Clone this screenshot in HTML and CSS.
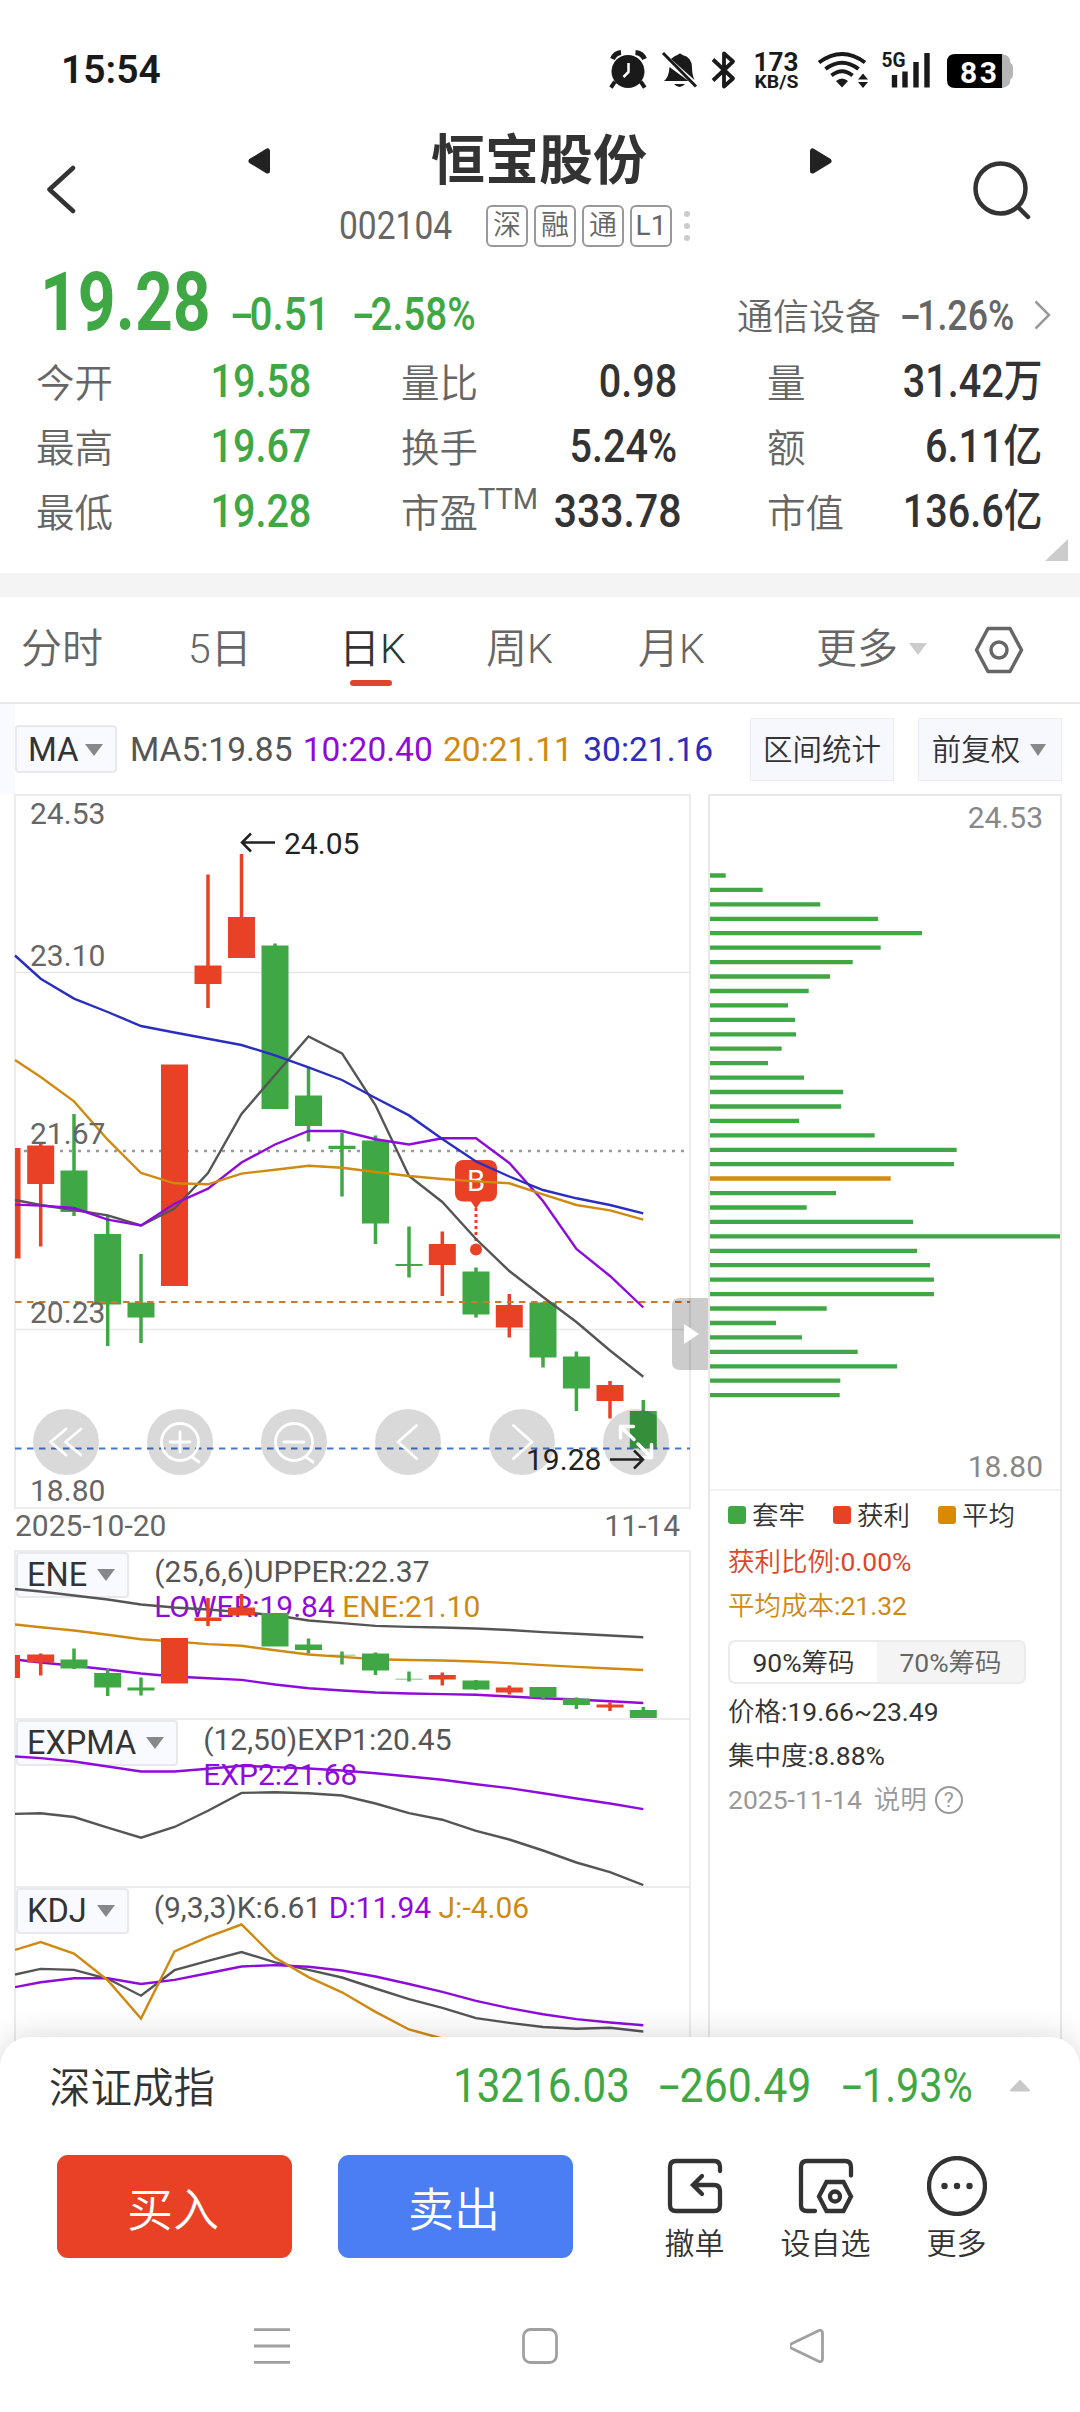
FILE: index.html
```html
<!DOCTYPE html>
<html lang="zh-CN">
<head>
    <meta charset="UTF-8">
    <meta name="viewport" content="width=device-width, initial-scale=1.0">
    <title>恒宝股份 002104</title>
    <link rel="stylesheet" href="styles.css">
</head>
<body>
<div class="page">

    <!-- 状态栏 -->
    <div class="status">
        <span class="time">15:54</span>
        <svg class="status-icons" width="420" height="50" viewBox="600 45 420 50">
            <g fill="#1a1a1a">
                <circle cx="628" cy="71.500" r="16.500"/>
                <path d="M615 83l-4 6M641 83l4 6" stroke="#1a1a1a" stroke-width="4" transform="translate(3 -1) scale(.995)"/>
                <path d="M612.500 59q2.500-6 8.500-6.500M635.500 52.500q6.500.5 9 6.500" fill="none" stroke="#1a1a1a" stroke-width="5"/>
                <path d="M628.500 63v9l-5 5" fill="none" stroke="#fff" stroke-width="2.500"/>
                <path d="M664 81q5-4 5.500-14l19 14zM671 59q4-3.500 6.500-4 2.500-3 5 0 9 2 9.500 12 0 8 2.500 13zM674 84h11q-5.500 6-11 0z"/>
                <path d="M663 53l33 33.500" stroke="#1a1a1a" stroke-width="3"/>
                <path d="M713 59.500l20 19-9 8v-33l9 8-20 19" fill="none" stroke="#1a1a1a" stroke-width="3.800" stroke-linejoin="round"/>
                <path d="M842 87.500l-6-6.500q6-5 12 0z"/>
                <path d="M831.500 75.500q10.500-8.500 21 0M825.500 69q16.500-12.500 33 0M819 62.500q23-17 46 0" fill="none" stroke="#1a1a1a" stroke-width="4"/>
                <path d="M858 79.500l5-6 5 6zM858 82l5 6 5-6z"/>
                <path d="M894.500 75v12.500M905 71.500v16M916 62v25.500M927 53v34.500" stroke="#1a1a1a" stroke-width="5.400"/>
                <path d="M1002 54q8.500 1 8.500 9 2.500 1 2.500 4v8q0 3-2.500 4 0 8-8.500 9z" fill="#b5b5b5"/>
                <path d="M1002 54h-47q-8 0-8 8v18q0 8 8 8h47z" fill="#000"/>
            </g>
            <g class="status-text">
                <text x="753.500" y="71" font-size="26" textLength="45" lengthAdjust="spacingAndGlyphs">173</text>
                <text x="754.500" y="87.500" font-size="17.500" textLength="44" lengthAdjust="spacingAndGlyphs">KB/S</text>
                <text x="881.500" y="67" font-size="21" textLength="24" lengthAdjust="spacingAndGlyphs">5G</text>
                <text x="960" y="82.500" font-size="30" textLength="37" fill="#fff">83</text>
            </g>
        </svg>
    </div>

    <!-- 标题 -->
    <header class="head">
        <svg width="30" height="50" viewBox="48 166 30 50"><path d="M74 169L50.500 190.500 74 212" fill="none" stroke="#333" stroke-width="4.500" stroke-linecap="round" stroke-linejoin="round"/></svg>
        <svg class="prev" width="24" height="28" viewBox="0 0 24 28"><path d="M20.500 4v20L4 14z" fill="#222" stroke="#222" stroke-width="5" stroke-linejoin="round"/></svg>
        <div class="title">
            <h1>恒宝股份</h1>
            <div class="code">
                <span class="num code-num">002104</span>
                <i>深</i><i>融</i><i>通</i><i>L1</i>
                <svg width="6" height="32" viewBox="0 0 6 32" fill="#ccc"><circle cx="3" cy="4" r="3"/><circle cx="3" cy="16" r="3"/><circle cx="3" cy="28" r="3"/></svg>
            </div>
        </div>
        <svg class="next" width="24" height="28" viewBox="0 0 24 28"><path d="M3.500 4v20L20 14z" fill="#222" stroke="#222" stroke-width="5" stroke-linejoin="round"/></svg>
        <svg class="search" width="60" height="60" viewBox="972 160 60 60" fill="none" stroke="#333" stroke-width="4.500" stroke-linecap="round"><circle cx="1000.500" cy="188.500" r="25"/><path d="M1018 207l10 10"/></svg>
    </header>

    <!-- 报价 -->
    <section class="quote">
        <div class="price-row">
            <span class="num price">19.28</span>
            <span class="num change"><i class="minus">-</i>0.51</span>
            <span class="num percent"><i class="minus">-</i>2.58%</span>
            <span class="sector">通信设备</span>
            <span class="num sector-num"><i class="minus">-</i>1.26%</span>
            <svg width="20" height="30" viewBox="0 0 20 30"><path d="M2.500 1.500L16 15 2.500 28.500" fill="none" stroke="#999" stroke-width="2.500"/></svg>
        </div>
        <div class="stats">
            <div class="cell"><label>今开</label><b class="num green">19.58</b></div>
            <div class="cell"><label>量比</label><b class="num">0.98</b></div>
            <div class="cell"><label>量</label><b class="num">31.42<em>万</em></b></div>
            <div class="cell"><label>最高</label><b class="num green">19.67</b></div>
            <div class="cell"><label>换手</label><b class="num">5.24%</b></div>
            <div class="cell"><label>额</label><b class="num">6.11<em>亿</em></b></div>
            <div class="cell"><label>最低</label><b class="num green">19.28</b></div>
            <div class="cell"><label>市盈<sup>TTM</sup></label><b class="num wide-num">333.78</b></div>
            <div class="cell"><label>市值</label><b class="num">136.6<em>亿</em></b></div>
        </div>
        <div class="corner"></div>
    </section>

    <!-- 周期 -->
    <nav class="tabs">
        <span>分时</span>
        <span>5日</span>
        <span class="active">日K</span>
        <span>周K</span>
        <span>月K</span>
        <span class="more">更多<i class="arrow light"></i></span>
        <svg width="50" height="50" viewBox="974 624 50 50" fill="none" stroke="#666" stroke-width="3.500" stroke-linejoin="round"><path d="M988 627.500h22l11.500 21.500-11.500 21.500h-22L976.500 649z"/><circle cx="999" cy="649" r="8"/></svg>
    </nav>

    <div class="ma-row">
        <div class="ma-select">MA<i class="arrow"></i></div>
        <div class="ma-values"><span class="c1">MA5:19.85</span> <span class="c2">10:20.40</span> <span class="c3">20:21.11</span> <span class="c4">30:21.16</span></div>
        <div class="tool">区间统计</div>
        <div class="tool">前复权<i class="arrow"></i></div>
    </div>

    <main class="charts">
        <div class="left">
            <!-- K线 -->
            <svg class="kline" width="677" height="715" viewBox="14 794 677 715">
                <path class="grid" d="M15 972.500H690M15 1329.500H690"/>
                <rect class="frame" x="15" y="795" width="675" height="713"/>
                <path d="M24 1151H685" stroke="#999" stroke-width="2.500" stroke-dasharray="3 6"/>
                <path class="wick up" d="M40.700 1144V1246.500M208 874.500V1008M241.500 854V920M442.300 1231.500V1296M509.300 1294V1337.500M610 1381V1418.500"/>
                <path class="wick down" d="M74 1114V1216M107.700 1215V1346M141 1254V1343M275 943.500V950M308.500 1067.500V1141.500M342 1132.500V1196.500M375.500 1135.500V1244M409 1226.500V1277.500M476 1267.500V1317.500M543 1302.500V1367.500"/>
                <path class="wick down" d="M576.400 1351.500V1411M643.300 1400V1411"/>
                <path d="M17.800 1148V1258.500" stroke="#e84125" stroke-width="5.500"/>
                <path class="body up" d="M40.700 1145.500V1184M174.500 1064.500V1286M208 965.500V984M241.500 917V958M442.300 1244V1265M509.300 1305V1327.500M610 1385V1401"/>
                <path class="body down" d="M74 1170.500V1212M107.700 1234V1304.500M141 1302.500V1317.500M275 945.500V1109M308.500 1095.500V1126M342 1145.800V1149M375.500 1140.500V1223.500M409 1264V1266M476 1271.500V1314.500M543 1302.500V1357.500M576.400 1356.500V1388.500M643.300 1411V1448.500"/>
                <path d="M15 1302H690" stroke="#c97a2b" stroke-width="2" stroke-dasharray="6.500 5.500"/>
                <path d="M15 1448.500H690" stroke="#4a78c8" stroke-width="2" stroke-dasharray="6.500 5.500"/>
                <g class="marker">
                    <rect x="455" y="1160" width="42" height="41.500" rx="8"/>
                    <path d="M470 1200h12l-6 9z"/>
                    <path d="M476 1208V1243" stroke="#e84125" stroke-width="3" stroke-dasharray="3 3"/>
                    <circle cx="476" cy="1249.500" r="6"/>
                    <text x="476" y="1191" text-anchor="middle" fill="#fff">B</text>
                </g>
                <polyline class="line c1" points="15,1200 40.700,1205 74,1210 107.700,1215.300 141,1225.500 174.500,1208.500 208,1173 241.500,1114 275,1075 308.500,1036.400 342,1053.400 375.500,1105.300 409,1176 442.300,1202 476,1239 509.300,1271 543,1297 576.400,1322 610,1350.500 643.300,1376.700"/>
                <polyline class="line c2" points="15,1204.600 40.700,1205.600 74,1208 107.700,1219.600 141,1225.500 174.500,1203.700 208,1188.600 241.500,1162.500 275,1144.500 308.500,1131 342,1131 375.500,1139.200 409,1144.500 442.300,1138.200 476,1138.200 509.300,1163 543,1201 576.400,1249 610,1276 643.300,1307.500"/>
                <polyline class="line c3" points="15,1060 40.700,1077 74,1101.400 107.700,1139.700 141,1173 174.500,1183.300 208,1184.300 241.500,1173.600 275,1169.700 308.500,1165.800 342,1167.800 375.500,1172 409,1176 442.300,1179 476,1181.400 509.300,1183.300 543,1194.400 576.400,1205 610,1210.400 643.300,1219.700"/>
                <polyline class="line c4" points="15,955.500 40.700,978.700 74,998.600 107.700,1012 141,1026 174.500,1032.500 208,1038.800 241.500,1045 275,1055.300 308.500,1067.400 342,1080 375.500,1098 409,1115.400 442.300,1139 476,1161.500 509.300,1176.500 543,1190 576.400,1198.300 610,1205 643.300,1213.300"/>
                <g class="axis">
                    <text x="30" y="823.500">24.53</text>
                    <text x="30" y="966">23.10</text>
                    <text x="30" y="1144">21.67</text>
                    <text x="30" y="1323">20.23</text>
                    <text x="30" y="1501">18.80</text>
                </g>
                <!-- 底部工具按钮 -->
                <g fill="#000" fill-opacity=".15">
                    <circle cx="66" cy="1442" r="33"/><circle cx="180" cy="1442" r="33"/><circle cx="294" cy="1442" r="33"/>
                    <circle cx="408" cy="1442" r="33"/><circle cx="522" cy="1442" r="33"/><circle cx="636" cy="1442" r="33"/>
                </g>
                <g class="tools">
                    <path d="M66 1429L50.500 1442 66 1455M81 1429L65.500 1442 81 1455"/>
                    <circle cx="180" cy="1442" r="18.500"/><path d="M170 1442h20M180 1432v20M192 1457l7 5"/>
                    <circle cx="294" cy="1442" r="18.500"/><path d="M284 1442h20M306 1457l7 5"/>
                    <path d="M416.500 1425.500L398 1442l18.500 16.500M513.500 1425.500L532 1442l-18.500 16.500"/>
                    <path d="M620.500 1438v-11.500h13M620.500 1426.500l13.500 13M638 1444l13 13M638.500 1457.500h13v-13" stroke-width="3.500"/>
                </g>
                <path d="M275 842.500H242M251 833.500L242 842.500l9 9M610 1459.500h32.500M634 1450.500l9 9-9 9" fill="none" stroke="#222" stroke-width="2.500"/>
                <g class="axis dark"><text x="284" y="854">24.05</text><text x="526" y="1469.500">19.28</text></g>
                <path d="M708 1298h-28q-8 0-8 8v56q0 8 8 8h28z" fill="#000" fill-opacity=".2"/>
                <path d="M684 1324l15 10-15 10z" fill="#fff"/>
            </svg>
            <div class="dates"><span>2025-10-20</span><span>11-14</span></div>

            <!-- 副图 ENE -->
            <div class="sub">
                <div class="sub-select">ENE<i class="arrow"></i></div>
                <div class="sub-values"><span class="c1">(25,6,6)UPPER:22.37</span><br><span class="c2">LOWER:19.84</span> <span class="c3">ENE:21.10</span></div>
                <svg width="675" height="168" viewBox="15 1550.500 675 168">
                    <polyline class="line c1" points="15,1589.500 40.700,1592 74,1596 107.700,1600 141,1605 174.500,1608 208,1610 241.500,1612.600 275,1615.700 308.500,1621 342,1623.600 375.500,1626.400 409,1627.400 442.300,1628 476,1629 509.300,1630.500 543,1632.600 576.400,1634.300 610,1636 643.300,1637.700"/>
                    <polyline class="line c3" points="15,1625 40.700,1627.800 74,1631 107.700,1635.300 141,1639.800 174.500,1642 208,1644.600 241.500,1646.300 275,1650.800 308.500,1655 342,1657.400 375.500,1659.800 409,1660.500 442.300,1661 476,1662 509.300,1663.600 543,1665.600 576.400,1667.400 610,1669 643.300,1670.500"/>
                    <polyline class="line c2" points="15,1660 40.700,1663 74,1666.300 107.700,1670 141,1674 174.500,1677 208,1678.700 241.500,1680.400 275,1685 308.500,1688.700 342,1691 375.500,1693 409,1694 442.300,1694.600 476,1695.200 509.300,1697 543,1698.700 576.400,1700 610,1701.800 643.300,1703.500"/>
                    <path class="wick up" d="M40.700 1654V1676M208 1598.500V1626.500M241.500 1594.500V1610M442.300 1673V1686M509.300 1686V1695M610 1703V1711.500"/>
                    <path class="wick down" d="M74 1649V1669.500M107.700 1669.500V1696.500M141 1678V1696M308.500 1639V1654M342 1652V1665M375.500 1653V1675.500M409 1672V1682M476 1680.500V1690.500M543 1690V1700.500M576.400 1698V1709.500M643.300 1707.500V1712"/>
                    <path d="M17.500 1655.500V1678.500" stroke="#e84125" stroke-width="5"/>
                    <path class="body up" d="M40.700 1655V1663M174.500 1638.500V1684M208 1618V1621.500M241.500 1608V1616M442.300 1675.500V1680M509.300 1688V1693M610 1705V1708"/>
                    <path class="body down" d="M74 1660V1669M107.700 1673.500V1688M141 1688V1691M275 1613.500V1647M308.500 1645V1650.500M375.500 1654V1671M476 1681V1690M543 1687.500V1698M576.400 1699V1705.500M643.300 1710.500V1718.500"/>
                    <path class="body down" opacity=".45" d="M342 1655V1656.500M409 1679V1680.500"/>
                </svg>
            </div>

            <!-- 副图 EXPMA -->
            <div class="sub">
                <div class="sub-select">EXPMA<i class="arrow"></i></div>
                <div class="sub-values"><span class="c1">(12,50)EXP1:20.45</span><br><span class="c2">EXP2:21.68</span></div>
                <svg width="675" height="168" viewBox="15 1718.500 675 168">
                    <polyline class="line c2" points="15,1757 40.700,1758.600 74,1762 107.700,1767 141,1772 174.500,1772 208,1769.300 241.500,1766.200 275,1767.600 308.500,1769 342,1771 375.500,1773.800 409,1777 442.300,1780.300 476,1784.800 509.300,1788.600 543,1793.700 576.400,1799 610,1804 643.300,1809.600"/>
                    <polyline class="line c1" points="15,1814.400 40.700,1813.700 74,1817.500 107.700,1828.200 141,1838.200 174.500,1827.500 208,1811.300 241.500,1793.400 275,1792.700 308.500,1793.700 342,1796 375.500,1804 409,1813.700 442.300,1820.200 476,1831.300 509.300,1840 543,1851 576.400,1863 610,1872.600 643.300,1885.500"/>
                </svg>
            </div>

            <!-- 副图 KDJ -->
            <div class="sub">
                <div class="sub-select">KDJ<i class="arrow"></i></div>
                <div class="sub-values"><span class="c1">(9,3,3)K:6.61</span> <span class="c2">D:11.94</span> <span class="c3">J:-4.06</span></div>
                <svg width="675" height="168" viewBox="15 1886.500 675 168">
                    <polyline class="line c1" points="15,1975 40.700,1969.400 74,1970.400 107.700,1979.300 141,1996.200 174.500,1970.700 208,1961.400 241.500,1952.500 275,1962.800 308.500,1970.400 342,1978 375.500,1989 409,1999.700 442.300,2008.300 476,2018.600 509.300,2023.400 543,2027.500 576.400,2029.300 610,2028.200 643.300,2032"/>
                    <polyline class="line c2" points="15,1987.600 40.700,1982.800 74,1978.700 107.700,1978.700 141,1984.500 174.500,1980.400 208,1973.800 241.500,1967 275,1965.600 308.500,1967.300 342,1971 375.500,1977 409,1984.500 442.300,1992.400 476,2001.400 509.300,2008.600 543,2014.800 576.400,2019.600 610,2023 643.300,2025.800"/>
                    <polyline class="line c3" points="15,1950.400 40.700,1942.500 74,1954 107.700,1980.700 141,2019 174.500,1952 208,1937.300 241.500,1925 275,1958 308.500,1977.600 342,1992.800 375.500,2012.400 409,2030 442.300,2039"/>
                </svg>
            </div>
        </div>

        <!-- 筹码分布 -->
        <aside class="chips">
            <svg width="350" height="693" viewBox="710 796 350 693">
                <path d="M710 875.500h15.700M710 889.900h52.700M710 904.400h110.300M710 918.800h168M710 933.200h212M710 947.700h170.700M710 962.100h142.700M710 976.500h120M710 991h98.700M710 1005.400h78M710 1019.900h85M710 1034.300h86M710 1048.700h71.700M710 1063.200h58M710 1077.600h94M710 1092h133M710 1106.500h131M710 1120.900h89M710 1135.300h164.700M710 1149.800h246.700M710 1164.200h244M710 1193.100h126M710 1207.500h96.700M710 1221.900h203M710 1236.400h350M710 1250.800h207M710 1265.200h220M710 1279.700h224M710 1294.100h224M710 1308.500h116.700M710 1323h66M710 1337.400h92M710 1351.900h147.700M710 1366.300h187M710 1380.700h130.300M710 1395.200h129.700" stroke="#3fa845" stroke-width="4.300"/>
                <path d="M710 1178.500h180.700" stroke="#d68a12" stroke-width="4.300"/>
                <text x="1043" y="828" text-anchor="end">24.53</text>
                <text x="1043" y="1477" text-anchor="end">18.80</text>
            </svg>
            <div class="info">
                <div class="legend"><span><i class="bg-green"></i>套牢</span><span><i class="bg-red"></i>获利</span><span><i class="bg-orange"></i>平均</span></div>
                <p class="red"><em>获利比例</em>:0.00%</p>
                <p class="c3"><em>平均成本</em>:21.32</p>
                <div class="seg"><span class="on">90%<em>筹码</em></span><span>70%<em>筹码</em></span></div>
                <p><em>价格</em>:<span class="dark">19.66~23.49</span></p>
                <p><em>集中度</em>:<span class="dark">8.88%</span></p>
                <p class="note">2025-11-14 <em class="help">说明</em><i>?</i></p>
            </div>
        </aside>
    </main>

    <!-- 底部 -->
    <footer class="bottom">
        <div class="index">
            <span class="index-name">深证成指</span>
            <span class="num i1">13216.03</span>
            <span class="num i2"><i class="minus">-</i>260.49</span>
            <span class="num i3"><i class="minus">-</i>1.93%</span>
            <svg width="22" height="13" viewBox="0 0 22 13"><path d="M2 11.500L11 2l9 9.500z" fill="#c8c8c8" stroke="#c8c8c8" stroke-width="2" stroke-linejoin="round"/></svg>
        </div>
        <div class="actions">
            <button class="buy">买入</button>
            <button class="sell">卖出</button>
            <div class="action">
                <svg width="60" height="60" viewBox="665 2156 60 60"><path d="M720 2171v-4q0-6-6-6h-38q-6 0-6 6v38q0 6 6 6h38q6 0 6-6v-14q0-6-6-6h-20M702 2176l-9 9 9 9"/></svg>
                撤单
            </div>
            <div class="action">
                <svg width="60" height="60" viewBox="796 2156 60 60"><path d="M851 2175.500v-8.500q0-6-6-6h-38q-6 0-6 6v38q0 6 6 6h8M826.500 2182h17l7.500 14.500-7.500 14.500h-17l-7.500-14.500z"/><circle cx="835" cy="2196.500" r="5"/></svg>
                设自选
            </div>
            <div class="action">
                <svg width="60" height="60" viewBox="928 2156 60 60"><circle cx="958" cy="2186" r="28"/><g fill="#333" stroke="none"><circle cx="945.500" cy="2186" r="3.200"/><circle cx="958" cy="2186" r="3.200"/><circle cx="970.500" cy="2186" r="3.200"/></g></svg>
                更多
            </div>
        </div>
        <div class="sysnav">
            <svg width="36" height="36" viewBox="0 0 36 36"><path d="M0 1.700h36M0 18h36M0 34.300h36"/></svg>
            <svg width="36" height="36" viewBox="0 0 36 36"><rect x="1.500" y="1.500" width="33" height="33" rx="7"/></svg>
            <svg width="36" height="36" viewBox="2 0 36 36"><path d="M31 2.500L4 15.500q-4.500 2.500 0 5L31 33.500q3.500 1 3.500-3v-25q0-4-3.500-3z"/></svg>
        </div>
    </footer>
</div>
</body>
</html>
```

FILE: styles.css
```css
* {
    box-sizing: border-box;
}
body {
    margin: 0;
    background: #fff;
    color: #333;
    font-family: Roboto, "Noto Sans CJK SC", sans-serif;
}
.page {
    width: 1080px;
    height: 2412px;
    overflow: hidden;
    display: flex;
    flex-direction: column;
}
svg {
    display: block;
    flex: none;
}
i, em {
    font-style: normal;
}

/* 窄体数字 */
.num {
    display: inline-block;
    font-weight: 500;
    white-space: nowrap;
    transform: scaleX(.86);
    transform-origin: left;
}
.minus {
    display: inline-block;
    width: .48em;
    transform: scaleX(1.75);
    transform-origin: left;
}
.green { color: #3fa845; }
.red { color: #e0452b; }
.c1 { color: #555; stroke: #555; }
.c2 { color: #8f0bdc; stroke: #8f0bdc; }
.c3 { color: #cf8a12; stroke: #cf8a12; }
.c4 { color: #2a2ec0; stroke: #2a2ec0; }

.arrow {
    display: inline-block;
    border: 9px solid transparent;
    border-top: 12px solid #888;
    border-bottom: 0;
}
.arrow.light { border-top-color: #ccc; }

/* 状态栏 */
.status {
    height: 134px;
    padding: 45px 60px 0 61px;
    display: flex;
    justify-content: space-between;
}
.time {
    font-size: 39px;
    font-weight: 600;
    line-height: 50px;
    color: #1a1a1a;
}
.status-text {
    font-weight: 700;
    fill: #1a1a1a;
}

/* 标题 */
.head {
    height: 128px;
    padding-left: 47px;
    display: flex;
    align-items: flex-start;
}
.head > svg:first-child { margin-top: 31px; }
.prev { margin: 13px 0 0 170px; }
.title {
    width: 538px;
    margin-top: -4px;
}
h1 {
    margin: 0 2px 0 0;
    font-size: 54px;
    line-height: 64px;
    text-align: center;
}
.code {
    display: flex;
    align-items: center;
    margin: 11px 0 0 68px;
    color: #666;
}
.code-num {
    width: 147px;
    font-size: 39px;
    font-weight: 400;
    line-height: 42px;
}
.code i {
    width: 42px;
    height: 42px;
    margin-right: 6px;
    border: 2px solid #999;
    border-radius: 6px;
    font-size: 28px;
    font-weight: 350;
    line-height: 37px;
    text-align: center;
}
.code i:nth-of-type(4) { font-weight: 400; }
.code svg { margin-left: 6px; }
.next { margin: 13px 0 0 0; }
.search { margin: 26px 0 0 139px; }

/* 报价 */
.quote {
    height: 311px;
    padding-top: 1px;
    position: relative;
}
.price-row {
    height: 86px;
    padding-left: 40px;
    display: flex;
    align-items: baseline;
    color: #3fa845;
    font-size: 46px;
}
.price {
    width: 190px;
    font-size: 81px;
    font-weight: 700;
    line-height: 80px;
    transform: scaleX(.815);
}
.change {
    width: 122px;
    transform: scaleX(.88);
}
.percent {
    width: 385px;
    transform: scaleX(.84);
}
.sector {
    width: 163px;
    font-size: 36px;
    font-weight: 350;
    color: #666;
}
.sector-num {
    width: 133px;
    font-size: 42px;
    color: #666;
    transform: scaleX(.85);
}
.stats {
    display: grid;
    grid-template-columns: 275px 276px 275px;
    column-gap: 90px;
    grid-auto-rows: 65px;
    padding-left: 36px;
}
.cell {
    display: flex;
    justify-content: space-between;
    align-items: center;
    white-space: nowrap;
}
.cell label {
    padding-top: 3px;
    font-size: 38.500px;
    font-weight: 350;
    line-height: 65px;
    color: #666;
}
.cell sup {
    font-size: 29px;
    font-weight: 400;
    line-height: 0;
    vertical-align: 18px;
}
.cell .num {
    font-size: 46px;
    line-height: 65px;
    transform-origin: right;
}
.cell .wide-num { transform: scaleX(.89); }
.cell em {
    font-size: 45px;
}
.corner {
    position: absolute;
    right: 12px;
    bottom: 12px;
    border-left: 23px solid transparent;
    border-bottom: 22px solid #ccc;
}

/* 周期 */
.tabs {
    height: 131px;
    padding-left: 21px;
    border-top: 24px solid #f4f4f4;
    border-bottom: 2px solid #e8e8e8;
    display: flex;
    align-items: center;
    font-size: 41px;
    font-weight: 350;
    line-height: 60px;
    color: #666;
}
.tabs span {
    position: relative;
    margin-top: -1px;
}
.tabs span:nth-child(1) { width: 167px; }
.tabs span:nth-child(2) { width: 151px; }
.tabs span:nth-child(3) { width: 147px; }
.tabs span:nth-child(4) { width: 152px; }
.tabs span:nth-child(5) { width: 178px; }
.tabs .more { width: 158px; }
.more .arrow { margin: 0 0 8px 11px; }
.tabs .active { color: #333; }
.active::after {
    content: "";
    position: absolute;
    left: 11px;
    bottom: -7px;
    width: 42px;
    height: 6px;
    border-radius: 3px;
    background: #e0452b;
}

/* 均线 */
.ma-row {
    height: 90px;
    border-left: 15px solid #f9faff;
    padding-right: 18px;
    display: flex;
    align-items: center;
    font-size: 33px;
}
.ma-select, .sub-select {
    background: #f9faff;
    border: 2px solid #e8e9ec;
    border-radius: 4px;
    color: #333;
}
.ma-select {
    width: 102px;
    height: 48px;
    padding-left: 11px;
    line-height: 46px;
    white-space: nowrap;
}
.ma-select .arrow { margin: 0 0 5px 6px; }
.ma-values {
    width: 619px;
    padding-left: 13px;
    font-size: 33.500px;
    word-spacing: 2px;
    white-space: nowrap;
}
.tool {
    width: 144px;
    height: 63px;
    margin-left: 14px;
    border: 1px solid #ececf2;
    background: #f7f8fe;
    font-size: 29.500px;
    font-weight: 350;
    line-height: 62px;
    text-align: center;
    white-space: nowrap;
    flex: none;
}
.tool + .tool { margin-left: 24px; }
.tool .arrow {
    margin: 0 2px 4px 10px;
    border-width: 12px 8px 0;
}

/* 图表 */
.charts {
    height: 1271px;
    margin-bottom: -28px;
    padding-left: 14px;
    display: flex;
    flex-shrink: 0;
    overflow: hidden;
}
.left { width: 677px; }
.kline { overflow: visible; position: relative; z-index: 1; }
.grid { stroke: #e8e8e8; stroke-width: 1.500; }
.frame { fill: none; stroke: #ececec; stroke-width: 2; }
.wick { stroke-width: 3.500; fill: none; }
.body { stroke-width: 27; fill: none; }
.up { stroke: #e84125; }
.down { stroke: #3fa845; }
.line { fill: none; stroke-width: 2.400; }
.axis {
    font-size: 30px;
    fill: #666;
}
.axis.dark { fill: #222; }
.marker {
    fill: #e84125;
    font-size: 29px;
}
.tools {
    fill: none;
    stroke: #fff;
    stroke-width: 2.800;
    stroke-linecap: round;
    stroke-linejoin: round;
}
.dates {
    height: 41px;
    padding: 0 11px 0 1px;
    display: flex;
    justify-content: space-between;
    font-size: 30px;
    line-height: 34px;
    color: #666;
}
.sub {
    position: relative;
    width: 677px;
    height: 168px;
    border: 2px solid #ececec;
    border-width: 2px 2px 0 2px;
    display: flex;
    align-items: flex-start;
}
.sub svg {
    position: absolute;
    left: -1px;
    top: -2px;
}
.sub-select {
    height: 46px;
    padding: 0 12px 0 9px;
    font-size: 32.500px;
    line-height: 43px;
}
.sub-select .arrow { margin: 0 0 5px 10px; }
.sub-values {
    margin-left: 25px;
    font-size: 30px;
    line-height: 35px;
    padding-top: 2px;
}
.sub-values span, .ma-values span, p { stroke: none; }

/* 筹码 */
.chips {
    width: 354px;
    margin-left: 17px;
    border: 2px solid #e8e8e8;
}
.chips text {
    font-size: 30px;
    fill: #888;
}
.info {
    border-top: 2px solid #f2f2f2;
    padding: 5px 0 0 18px;
    font-size: 26.500px;
}
.info em { font-weight: 350; }
.legend {
    display: flex;
    height: 44px;
    padding-bottom: 4px;
    align-items: center;
    color: #333;
}
.legend span {
    width: 105px;
    display: flex;
    align-items: center;
    font-size: 26.500px;
    font-weight: 350;
    line-height: 32px;
}
.legend i {
    width: 18px;
    height: 18px;
    margin: 0 6px 2px 0;
    border-radius: 3px;
    flex: none;
}
.bg-green { background: #3fa845; }
.bg-red { background: #e84125; }
.bg-orange { background: #d88a00; }
.info p {
    margin: 0;
    line-height: 44px;
}
.dark { color: #333; }
.seg {
    display: flex;
    width: 298px;
    height: 44px;
    margin: 12px 0 6px;
    border: 2px solid #ebebeb;
    border-radius: 7px;
    background: #f4f4f4;
    color: #666;
    line-height: 41px;
    text-align: center;
}
.seg span { flex: 1; }
.seg .on {
    background: #fff;
    color: #333;
    border-radius: 6px 0 0 6px;
}
.info .note {
    display: flex;
    align-items: center;
    color: #999;
}
.note .help { margin: 0 8px 0 12px; }
.note i {
    width: 28px;
    height: 28px;
    border: 2px solid #999;
    border-radius: 50%;
    font-size: 21px;
    line-height: 24px;
    text-align: center;
}

/* 底部 */
.bottom {
    position: relative;
    z-index: 2;
    height: 375px;
    flex: none;
    background: #fff;
    border-radius: 30px 30px 0 0;
    box-shadow: 0 0 32px rgba(0, 0, 0, .16);
}
.index {
    height: 96px;
    padding-left: 49px;
    display: flex;
    align-items: center;
    color: #3fa845;
}
.index-name {
    width: 404px;
    font-size: 41.500px;
    font-weight: 350;
    color: #333;
}
.index .num {
    font-size: 49px;
    font-weight: 400;
}
.i1 { width: 206px; }
.index .i2 {
    width: 183px;
    transform: scaleX(.875);
}
.index .i3 {
    width: 167px;
    transform: scaleX(.845);
}
.actions {
    height: 154px;
    padding: 22px 0 0 57px;
    display: flex;
    align-items: flex-start;
}
.actions button {
    width: 235px;
    height: 103px;
    margin-right: 46px;
    border: 0;
    border-radius: 11px;
    padding: 0 3px 2px 0;
    font: 350 46px Roboto, "Noto Sans CJK SC", sans-serif;
    color: #fff;
}
.actions .buy { background: #e84125; }
.actions .sell {
    background: #4a7ef2;
    margin-right: 56px;
}
.action {
    width: 131px;
    margin-top: 1px;
    display: flex;
    flex-direction: column;
    align-items: center;
    font-size: 30px;
    font-weight: 350;
    line-height: 55px;
}
.action svg {
    fill: none;
    stroke: #333;
    stroke-width: 4.300;
    stroke-linecap: round;
}
.sysnav {
    display: flex;
    padding: 41px 0 0 254px;
    gap: 232px;
}
.sysnav svg {
    fill: none;
    stroke: #a0a0a0;
    stroke-width: 2.800;
}
```
